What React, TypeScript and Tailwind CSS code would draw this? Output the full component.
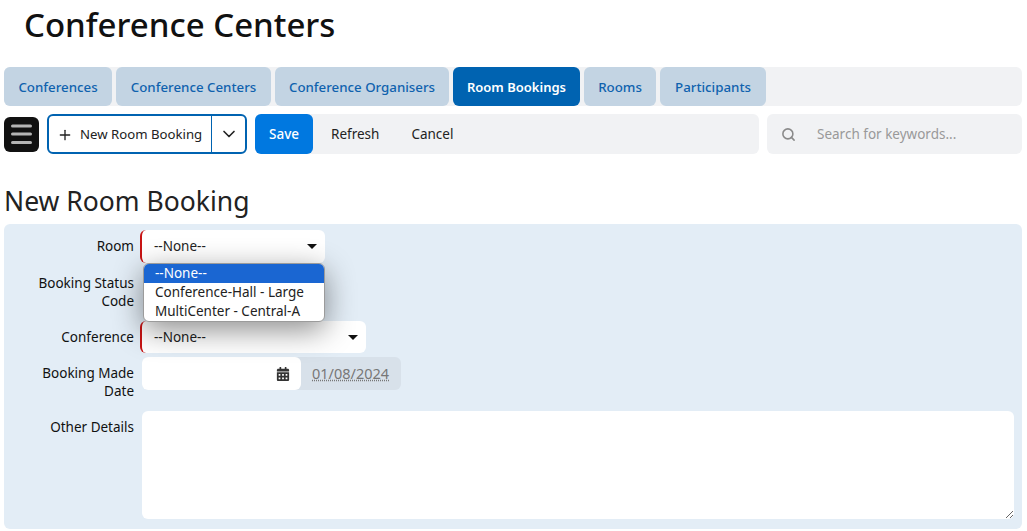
import { ChevronDown, Plus, Search } from "lucide-react";
import { FaCalendarAlt } from "react-icons/fa";

const tabs = ["Conferences", "Conference Centers", "Conference Organisers", "Room Bookings", "Rooms", "Participants"];
const tabWidths = ["w-[108px]", "w-[155px]", "w-[174px]", "w-[127px]", "w-[72px]", "w-[106px]"];

function SelectBox({ width, height, children }: { width: string; height: string; children?: React.ReactNode }) {
  return (
    <div className={`relative -ml-[2px] flex items-center justify-between rounded-md border-l-2 border-[#c81414] bg-white pl-[12px] pr-[8px] ${width} ${height}`}>
      <span>--None--</span>
      <span className="h-0 w-0 border-x-[5px] border-t-[5px] border-x-transparent border-t-[#111]" />
      {children}
    </div>
  );
}

function Field({ label, className, children }: { label: React.ReactNode; className?: string; children: React.ReactNode }) {
  return (
    <div className={`flex gap-[8px] ${className ?? ""}`}>
      <label className="w-[130px] shrink-0 pt-[7px] text-right leading-[18px] text-[#111]">{label}</label>
      {children}
    </div>
  );
}

export default function App() {
  return (
    <div className="h-[531px] w-[1027px] overflow-hidden bg-white font-['Noto_Sans',sans-serif] text-[13.5px] text-[#222]">
      <h1 className="pl-6 pt-[4px] text-[33px] font-medium leading-[42px] text-[#111]">Conference Centers</h1>

      <nav className="ml-1 mt-[21px] flex h-[39px] w-[1018px] gap-1 rounded-md bg-[#f1f2f4] pr-1">
        {tabs.map((t, i) => (
          <a
            key={t}
            className={`flex items-center justify-center rounded-md pt-[2px] ${tabWidths[i]} ${
              t === "Room Bookings" ? "bg-[#0063b1] text-[13px] font-semibold text-white" : "bg-[#c3d4e3] text-[13.3px] font-medium text-[#0f62ae]"
            }`}
          >
            {t}
          </a>
        ))}
      </nav>

      <div className="ml-1 mt-2 flex h-10 w-[1018px] items-center">
        <button className="flex h-[35px] w-[35px] items-center justify-center rounded-md bg-[#111]">
          <svg width="21" height="22" viewBox="0 0 21 22" fill="#b5b5b5">
            <rect y="1.5" width="21" height="3" rx="1.5" />
            <rect y="9.5" width="21" height="3" rx="1.5" />
            <rect y="18" width="21" height="3" rx="1.5" />
          </svg>
        </button>
        <div className="ml-2 flex h-10 w-[200px] items-center rounded-md border-2 border-[#0063b1] bg-white">
          <div className="flex h-full w-[163px] items-center gap-[7px] border-r border-[#0063b1] pl-[8px] pt-px text-[13.2px]">
            <Plus size={16} strokeWidth={2} className="text-[#222]" />
            <span className="whitespace-nowrap">New Room Booking</span>
          </div>
          <div className="flex flex-1 items-center justify-center">
            <ChevronDown size={20} strokeWidth={2} className="text-[#222]" />
          </div>
        </div>
        <div className="ml-2 flex h-10 w-[504px] items-center rounded-md bg-[#f1f2f4]">
          <button className="h-10 w-[58px] rounded-md bg-[#0078e0] pt-px font-medium text-white">Save</button>
          <span className="ml-[18px] pt-px">Refresh</span>
          <span className="ml-8 pt-px">Cancel</span>
        </div>
        <div className="ml-2 flex h-10 flex-1 items-center rounded-md bg-[#f1f2f4] pl-[14px] text-[#999]">
          <Search size={15} strokeWidth={2.5} className="text-[#8a8a8a]" />
          <span className="ml-[21px] pt-px">Search for keywords...</span>
        </div>
      </div>

      <h2 className="ml-[4px] mt-[28px] text-[26.5px] leading-[38px] text-[#222]">New Room Booking</h2>

      <form className="ml-1 mt-[4px] flex h-[305px] w-[1018px] flex-col rounded-md bg-[#e3edf6] pt-[6px]">
        <Field label="Room" className="relative z-10">
          <SelectBox width="w-[185px]" height="h-[33px]">
            <ul className="absolute left-[1px] top-[33px] w-[182px] overflow-hidden rounded-md border border-[#9b9b9b] bg-white leading-[19px] shadow-[0_8px_30px_rgba(0,0,0,0.45)]">
              <li className="h-[19px] bg-[#1a66d2] pl-[11px] text-white">--None--</li>
              <li className="h-[19px] pl-[11px]">Conference-Hall - Large</li>
              <li className="h-[19px] pl-[11px]">MultiCenter - Central-A</li>
            </ul>
          </SelectBox>
        </Field>
        <div className="mt-[11px] h-[47px] w-[130px] text-right leading-[18px] text-[#111]">
          Booking Status
          <br />
          Code
        </div>
        <Field label="Conference">
          <SelectBox width="w-[226px]" height="h-[32px]" />
        </Field>
        <Field label={<>Booking Made<br />Date</>} className="mt-[4px] h-[33px]">
          <div className="flex h-[33px] w-[259px] rounded-md bg-[#d8e1ea]">
            <div className="flex w-[159px] items-center justify-end rounded-md bg-white pr-[11px]">
              <FaCalendarAlt size={14} className="text-[#333]" />
            </div>
            <span className="ml-[11px] self-center text-[14.5px] text-[#777] underline decoration-dotted">01/08/2024</span>
          </div>
        </Field>
        <Field label="Other Details" className="mt-[21px]">
          <textarea className="h-[108px] w-[872px] rounded-md bg-white" />
        </Field>
      </form>
    </div>
  );
}
